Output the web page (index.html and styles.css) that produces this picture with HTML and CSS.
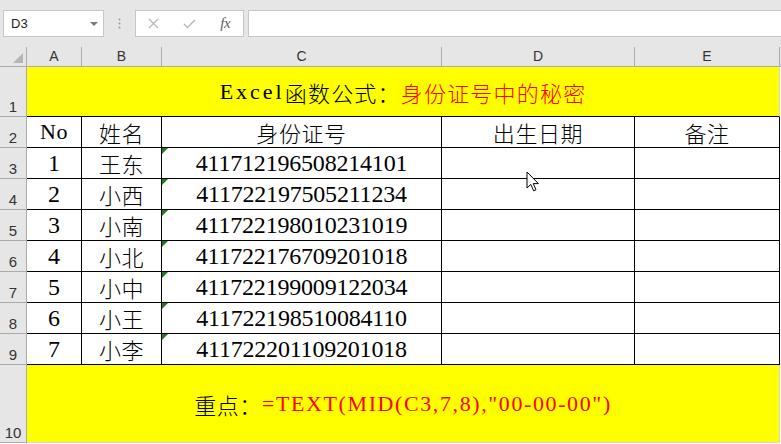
FILE: index.html
```html
<!DOCTYPE html>
<html lang="zh-CN">
<head>
    <meta charset="UTF-8">
    <title>Excel函数公式</title>
    <link rel="stylesheet" href="styles.css">
</head>
<body>
    <div class="toolbar">
        <div class="namebox"><span>D3</span><span class="caret"></span></div>
        <div class="grip">
            <svg width="3" height="11" viewBox="0 0 3 11"><circle cx="1.5" cy="1.5" r="1" fill="#9a9a9a"/><circle cx="1.5" cy="5.5" r="1" fill="#9a9a9a"/><circle cx="1.5" cy="9.5" r="1" fill="#9a9a9a"/></svg>
        </div>
        <div class="fxbox">
            <span class="btn"><svg width="11" height="11" viewBox="0 0 11 11"><path d="M1 1L10 10M10 1L1 10" stroke="#b8b8b8" stroke-width="1.3"/></svg></span>
            <span class="btn"><svg width="13" height="10" viewBox="0 0 13 10"><path d="M1 5L4.5 8.5L12 1" stroke="#b8b8b8" stroke-width="1.5" fill="none"/></svg></span>
            <span class="btn fx">fx</span>
        </div>
        <div class="formula"></div>
    </div>

    <div class="sheet">
        <div class="hd corner"><span class="tri"></span></div>
        <div class="hd">A</div>
        <div class="hd">B</div>
        <div class="hd">C</div>
        <div class="hd">D</div>
        <div class="hd">E</div>
        <div class="hd pad"></div>

        <div class="rh">1</div>
        <div class="c title"><span class="latin">Excel</span>函数公式：<span class="red">身份证号中的秘密</span></div>
        <div></div>

        <div class="rh">2</div>
        <div class="c">No</div>
        <div class="c">姓名</div>
        <div class="c">身份证号</div>
        <div class="c">出生日期</div>
        <div class="c">备注</div>
        <div></div>

        <div class="rh">3</div>
        <div class="c num">1</div>
        <div class="c">王东</div>
        <div class="c num id">411712196508214101</div>
        <div class="c"></div>
        <div class="c"></div>
        <div></div>

        <div class="rh">4</div>
        <div class="c num">2</div>
        <div class="c">小西</div>
        <div class="c num id">411722197505211234</div>
        <div class="c"></div>
        <div class="c"></div>
        <div></div>

        <div class="rh">5</div>
        <div class="c num">3</div>
        <div class="c">小南</div>
        <div class="c num id">411722198010231019</div>
        <div class="c"></div>
        <div class="c"></div>
        <div></div>

        <div class="rh">6</div>
        <div class="c num">4</div>
        <div class="c">小北</div>
        <div class="c num id">411722176709201018</div>
        <div class="c"></div>
        <div class="c"></div>
        <div></div>

        <div class="rh">7</div>
        <div class="c num">5</div>
        <div class="c">小中</div>
        <div class="c num id">411722199009122034</div>
        <div class="c"></div>
        <div class="c"></div>
        <div></div>

        <div class="rh">8</div>
        <div class="c num">6</div>
        <div class="c">小王</div>
        <div class="c num id">411722198510084110</div>
        <div class="c"></div>
        <div class="c"></div>
        <div></div>

        <div class="rh">9</div>
        <div class="c num">7</div>
        <div class="c">小李</div>
        <div class="c num id">411722201109201018</div>
        <div class="c"></div>
        <div class="c"></div>
        <div></div>

        <div class="rh">10</div>
        <div class="c note">重点：<span class="red formula-text">=TEXT(MID(C3,7,8),"00-00-00")</span></div>
        <div></div>
    </div>

    <svg class="cursor" width="14" height="22" viewBox="0 0 14 22">
        <path d="M1 1L1 17L4.8 13.4L7.6 19.8L10 18.8L7.3 12.6L12.4 12.6Z" fill="#fff" stroke="#000" stroke-width="1" stroke-linejoin="round"/>
    </svg>
</body>
</html>
```

FILE: styles.css
```css
body {
    margin: 0;
    width: 781px;
    height: 444px;
    overflow: hidden;
    position: relative;
    background: #fff;
    font-family: "Liberation Sans", Arial, sans-serif;
}

.toolbar {
    display: flex;
    align-items: flex-start;
    height: 47px;
    box-sizing: border-box;
    padding: 10px 0 0 3px;
    background: #e6e6e6;
}

.namebox {
    width: 101px;
    height: 27px;
    box-sizing: border-box;
    background: #fff;
    border: 1px solid #c6c6c6;
    display: flex;
    align-items: center;
    justify-content: space-between;
    padding: 0 5px 0 7px;
    font-size: 13px;
    color: #222;
}

.caret {
    width: 0;
    height: 0;
    border-left: 4px solid transparent;
    border-right: 4px solid transparent;
    border-top: 4px solid #7a7a7a;
}

.grip {
    width: 31px;
    height: 27px;
    display: flex;
    align-items: center;
    justify-content: center;
}

.fxbox {
    width: 109px;
    height: 27px;
    box-sizing: border-box;
    background: #fff;
    border: 1px solid #c6c6c6;
    display: flex;
    align-items: center;
}

.btn {
    width: 36px;
    display: flex;
    justify-content: center;
    align-items: center;
}

.fx {
    font-family: "Liberation Serif", serif;
    font-style: italic;
    font-size: 15px;
    color: #5e5e5e;
    letter-spacing: -0.5px;
}

.formula {
    flex: 1;
    margin-left: 4px;
    height: 27px;
    box-sizing: border-box;
    background: #fff;
    border: 1px solid #c6c6c6;
    border-right: none;
}

.sheet {
    display: grid;
    grid-template-columns: 27px 55px 80px 280px 193px 145px 1px;
    grid-template-rows: 20px 50px repeat(8, 31px) 78px;
}

.hd {
    background: #e6e6e6;
    border-right: 1px solid #ababab;
    border-bottom: 1px solid #ababab;
    box-sizing: border-box;
    display: flex;
    justify-content: center;
    align-items: flex-end;
    padding-bottom: 2px;
    font-size: 14px;
    color: #333;
}

.hd.pad {
    border-right: none;
}

.corner {
    justify-content: flex-end;
    padding: 0 3px 3px 0;
}

.tri {
    width: 0;
    height: 0;
    border-left: 10px solid transparent;
    border-bottom: 10px solid #b5b5b5;
}

.rh {
    background: #e6e6e6;
    border-right: 1px solid #ababab;
    border-bottom: 1px solid #ababab;
    box-sizing: border-box;
    display: flex;
    justify-content: center;
    align-items: flex-end;
    padding-bottom: 2px;
    font-size: 15px;
    line-height: 1;
    color: #333;
}

.c {
    display: flex;
    align-items: center;
    justify-content: center;
    box-sizing: border-box;
    border-right: 1px solid #000;
    border-bottom: 1px solid #000;
    font-family: "Liberation Serif", "Noto Sans CJK SC", serif;
    font-weight: 300;
    font-size: 22px;
    letter-spacing: 0.6px;
    color: #000;
    white-space: nowrap;
}

.num {
    font-size: 24px;
    letter-spacing: -0.2px;
}

.title,
.note {
    grid-column: span 5;
    background: #ffff00;
    border-right-color: #d4d4d4;
}

.title {
    letter-spacing: 1.2px;
}

.title .latin {
    letter-spacing: 3px;
}

.note {
    border-bottom-color: #d4d4d4;
}

.formula-text {
    letter-spacing: 1.6px;
}

.red {
    color: #ff0000;
}

.id {
    position: relative;
}

.id::before {
    content: "";
    position: absolute;
    left: 0;
    top: 0;
    border-top: 6px solid #1e7b1e;
    border-right: 6px solid transparent;
}

.cursor {
    position: absolute;
    left: 526px;
    top: 171px;
}
```
